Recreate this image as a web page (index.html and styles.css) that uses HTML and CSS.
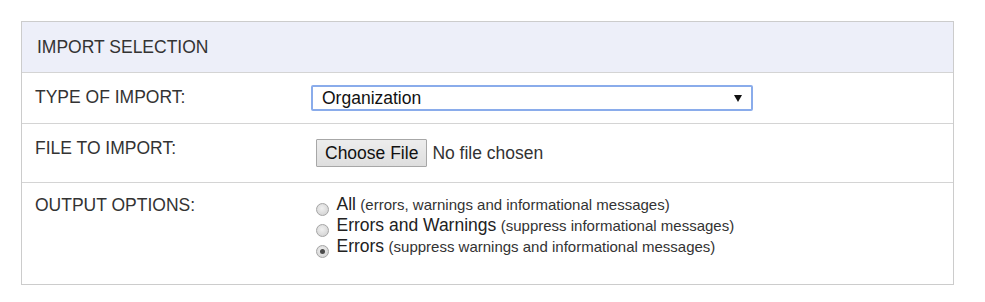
FILE: index.html
```html
<!DOCTYPE html>
<html lang="en">
<head>
    <meta charset="UTF-8">
    <title>Import Selection</title>
    <link rel="stylesheet" href="styles.css">
</head>
<body>

<div class="import-panel">
    <div class="panel-header">IMPORT SELECTION</div>

    <!-- Type of import -->
    <div class="form-row">
        <div class="form-label">TYPE OF IMPORT:</div>
        <div class="form-value">
            <span class="select-wrap">
                <select class="import-select">
                    <option>Organization</option>
                    <option>Users</option>
                    <option>Groups</option>
                </select>
            </span>
        </div>
    </div>

    <!-- File -->
    <div class="form-row file-row">
        <div class="form-label">FILE TO IMPORT:</div>
        <div class="form-value">
            <button class="file-button" type="button">Choose File</button>
            <span class="file-name">No file chosen</span>
        </div>
    </div>

    <!-- Output options -->
    <div class="form-row options-row">
        <div class="form-label">OUTPUT OPTIONS:</div>
        <div class="form-value">
            <label class="radio-option">
                <input type="radio" name="output" class="radio">
                <span class="option-main">All</span>
                <span class="option-note">(errors, warnings and informational messages)</span>
            </label>
            <label class="radio-option">
                <input type="radio" name="output" class="radio">
                <span class="option-main">Errors and Warnings</span>
                <span class="option-note">(suppress informational messages)</span>
            </label>
            <label class="radio-option">
                <input type="radio" name="output" class="radio" checked>
                <span class="option-main">Errors</span>
                <span class="option-note">(suppress warnings and informational messages)</span>
            </label>
        </div>
    </div>
</div>

</body>
</html>
```

FILE: styles.css
```css
body {
    font-family: 'Liberation Sans', Arial, sans-serif;
    background: #fff;
    margin: 0;
    padding: 21px;
    color: #333;
}
.import-panel {
    width: 931px;
    border: 1px solid #ccc;
}
.panel-header {
    height: 50px;
    line-height: 50px;
    padding-left: 15px;
    font-size: 17.5px;
    background-color: #edeff9;
    border-bottom: 1px solid #d4d4d4;
}
.form-row {
    display: grid;
    grid-template-columns: 289px 1fr;
    height: 50px;
    border-bottom: 1px solid #d4d4d4;
}
.file-row {
    height: 58px;
}
.options-row {
    height: 101px;
    border-bottom: none;
}
.form-label {
    padding: 14px 0 0 13px;
    font-size: 17.5px;
    line-height: 20px;
}
.options-row .form-label {
    padding-top: 12px;
}
.form-value {
    padding-top: 12px;
}
.file-row .form-value {
    padding-top: 15px;
    display: flex;
    align-items: center;
    align-self: start;
}
.options-row .form-value {
    padding-top: 11px;
}
.select-wrap {
    position: relative;
    display: inline-block;
}
.select-wrap::after {
    content: "";
    position: absolute;
    right: 11px;
    top: 10px;
    border-left: 4px solid transparent;
    border-right: 4px solid transparent;
    border-top: 7px solid #111;
}
.import-select {
    appearance: none;
    -webkit-appearance: none;
    width: 442px;
    height: 26px;
    margin: 0;
    padding: 0 0 0 9px;
    font-family: inherit;
    font-size: 17.5px;
    color: #111;
    background: #fff;
    border: 2px solid #8aaceb;
    border-radius: 2px;
    outline: none;
}
.file-button {
    height: 28px;
    margin-left: 5px;
    padding: 0 8px;
    font-family: inherit;
    font-size: 17.5px;
    color: #111;
    background: linear-gradient(#ededed, #dedede);
    border: 1px solid #a7a7a7;
    border-radius: 1px;
}
.file-name {
    margin-left: 5px;
    font-size: 17.5px;
}
.radio-option {
    display: block;
    height: 21px;
    line-height: 21px;
    margin-left: 5px;
    white-space: nowrap;
}
.radio {
    appearance: none;
    -webkit-appearance: none;
    width: 13px;
    height: 13px;
    margin: 0 3px 0 0;
    vertical-align: -6px;
    border: 1px solid #a5a5a5;
    border-radius: 50%;
    background: radial-gradient(circle at 45% 40%, #f0f0f0, #cdcdcd);
    position: relative;
}
.radio:checked::after {
    content: "";
    position: absolute;
    left: 3px;
    top: 3px;
    width: 5px;
    height: 5px;
    border-radius: 50%;
    background: #4a4a4a;
}
.option-main {
    font-size: 17.5px;
    color: #222;
}
.option-note {
    font-size: 15px;
}
```
